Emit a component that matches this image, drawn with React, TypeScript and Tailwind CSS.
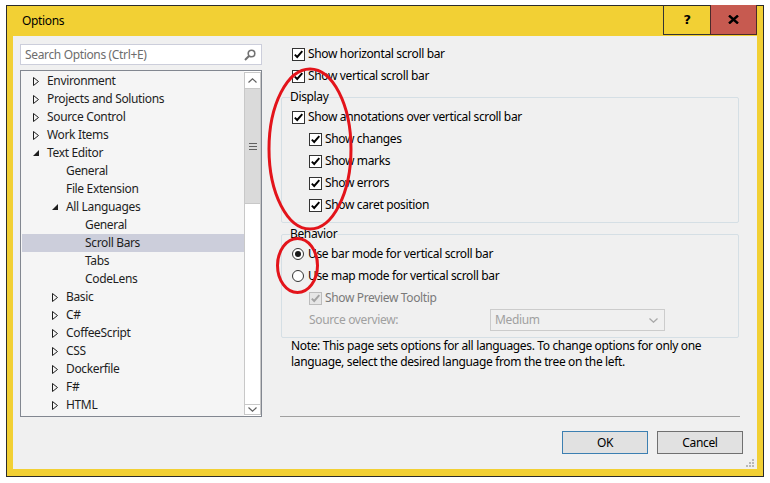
import React from "react";

type TreeNode = {
  label: string;
  level: 0 | 1 | 2;
  arrow?: "open" | "closed";
  selected?: boolean;
};

const tree: TreeNode[] = [
  { label: "Environment", level: 0, arrow: "closed" },
  { label: "Projects and Solutions", level: 0, arrow: "closed" },
  { label: "Source Control", level: 0, arrow: "closed" },
  { label: "Work Items", level: 0, arrow: "closed" },
  { label: "Text Editor", level: 0, arrow: "open" },
  { label: "General", level: 1 },
  { label: "File Extension", level: 1 },
  { label: "All Languages", level: 1, arrow: "open" },
  { label: "General", level: 2 },
  { label: "Scroll Bars", level: 2, selected: true },
  { label: "Tabs", level: 2 },
  { label: "CodeLens", level: 2 },
  { label: "Basic", level: 1, arrow: "closed" },
  { label: "C#", level: 1, arrow: "closed" },
  { label: "CoffeeScript", level: 1, arrow: "closed" },
  { label: "CSS", level: 1, arrow: "closed" },
  { label: "Dockerfile", level: 1, arrow: "closed" },
  { label: "F#", level: 1, arrow: "closed" },
  { label: "HTML", level: 1, arrow: "closed" },
];

const indent = ["pl-[11px]", "pl-[30px]", "pl-[49px]"];

function Arrow({ kind }: { kind?: "open" | "closed" }) {
  if (!kind) return null;
  if (kind === "closed")
    return (
      <svg width="6" height="9" viewBox="0 0 6 9">
        <path d="M0.5 0.5 L5.5 4.5 L0.5 8.5 Z" fill="none" stroke="#1e1e1e" strokeWidth="1" />
      </svg>
    );
  return (
    <svg width="6" height="6" viewBox="0 0 6 6">
      <path d="M6 0 L6 6 L0 6 Z" fill="#1e1e1e" />
    </svg>
  );
}

function Check({ disabled }: { disabled?: boolean }) {
  return (
    <span
      className={`flex h-[13px] w-[13px] shrink-0 items-center justify-center border ${
        disabled ? "border-[#bcbcbc] bg-[#e6e6e6]" : "border-[#333333] bg-white"
      }`}
    >
      <svg width="11" height="11" viewBox="0 0 11 11">
        <path
          d="M1.8 5.6 L4.2 8 L9.3 2.2"
          fill="none"
          stroke={disabled ? "#a3a3a3" : "#000000"}
          strokeWidth="1.9"
        />
      </svg>
    </span>
  );
}

function Radio({ on }: { on?: boolean }) {
  return (
    <span className="flex h-[12px] w-[12px] shrink-0 items-center justify-center rounded-full border border-[#333333] bg-white">
      {on && <span className="h-[6px] w-[6px] rounded-full bg-[#1a1a1a]" />}
    </span>
  );
}

export default function App() {
  return (
    <div className="relative h-[483px] w-[770px] overflow-hidden bg-white pl-[6px] pt-[5px] font-['Noto_Sans',sans-serif] text-[12px] tracking-[-0.35px] text-black">
      {/* Window */}
      <div className="flex h-[472px] w-[758px] flex-col border border-[#2b2b2b] bg-[#f2d034]">
        {/* Title bar */}
        <div className="flex h-[30px] shrink-0 items-start pr-[6px]">
          <div className="flex h-[29px] flex-1 items-center pl-[15px] leading-none">Options</div>
          <div className="-mt-px flex h-[30px] w-[47px] items-center justify-center border-b border-l border-[#333333] font-['DejaVu_Sans',sans-serif] text-[13px] font-bold">
            ?
          </div>
          <div className="-mt-px flex h-[30px] w-[47px] items-center justify-center border-x border-b border-[#4a2a2a] bg-[#c75a50]">
            <svg width="11" height="9" viewBox="0 0 11 9">
              <path d="M1 0.5 L10 8.5 M10 0.5 L1 8.5" stroke="#000" strokeWidth="2.4" />
            </svg>
          </div>
        </div>

        {/* Content */}
        <div className="relative mx-[6px] mb-[7px] flex flex-1 bg-[#f0f0f0] pl-[7px] pt-[8px]">
          {/* Left column */}
          <div className="flex w-[242px] flex-col">
            <div className="flex h-[21px] items-center border border-[#cccedb] bg-white pl-[4px] pr-[5px] text-[#6d6d6d]">
              <span className="flex-1 leading-none">Search Options (Ctrl+E)</span>
              <svg width="12" height="12" viewBox="0 0 12 12">
                <circle cx="7.5" cy="4.5" r="3.3" fill="none" stroke="#717171" strokeWidth="1.6" />
                <path d="M5.2 6.8 L1 11" stroke="#717171" strokeWidth="2" />
              </svg>
            </div>
            <div className="mt-[5px] flex h-[347px] border border-[#828790] bg-[#f5f5f5]">
              <div className="flex-1 pl-px pt-px">
                {tree.map((n, i) => (
                  <div
                    key={i}
                    className={`flex h-[18px] items-center ${indent[n.level]} ${
                      n.selected ? "bg-[#cccedb]" : ""
                    } text-[#1e1e1e]`}
                  >
                    <span className="flex w-[14px] items-center">
                      <Arrow kind={n.arrow} />
                    </span>
                    <span className="leading-none">{n.label}</span>
                  </div>
                ))}
              </div>
              {/* Scrollbar */}
              <div className="flex w-[17px] flex-col bg-white py-px">
                <div className="flex h-[17px] items-center justify-center border border-[#c8c8c8] bg-white">
                  <svg width="9" height="5" viewBox="0 0 9 5">
                    <path d="M0.5 4.5 L4.5 0.8 L8.5 4.5" fill="none" stroke="#606060" strokeWidth="1.2" />
                  </svg>
                </div>
                <div className="flex h-[115px] items-center justify-center border-x border-b border-[#c8c8c8] bg-[#dadada]">
                  <svg width="8" height="7" viewBox="0 0 8 7">
                    <path d="M0 0.5 H8 M0 3.5 H8 M0 6.5 H8" stroke="#606060" strokeWidth="1.2" />
                  </svg>
                </div>
                <div className="flex-1 border-x border-[#c8c8c8] bg-white" />
                <div className="flex h-[11px] items-center justify-center border border-[#c8c8c8] bg-white">
                  <svg width="9" height="5" viewBox="0 0 9 5">
                    <path d="M0.5 0.5 L4.5 4.2 L8.5 0.5" fill="none" stroke="#606060" strokeWidth="1.2" />
                  </svg>
                </div>
              </div>
            </div>
          </div>

          {/* Right column */}
          <div className="ml-[19px] flex w-[462px] flex-col">
            <div className="flex h-[20px] items-center gap-[3px] pl-[11px]">
              <Check />
              <span className="leading-none">Show horizontal scroll bar</span>
            </div>
            <div className="mt-[2px] flex h-[20px] items-center gap-[3px] pl-[11px]">
              <Check />
              <span className="leading-none">Show vertical scroll bar</span>
            </div>

            <fieldset className="mt-[3px] w-[458px] rounded-[2px] border border-[#d5dfe5] pb-[6px] pt-px">
              <legend className="ml-[8px] px-0 leading-[16px]">Display</legend>
              <div className="flex h-[22px] items-center gap-[3px] pl-[10px]">
                <Check />
                <span className="leading-none">Show annotations over vertical scroll bar</span>
              </div>
              {["Show changes", "Show marks", "Show errors", "Show caret position"].map((t) => (
                <div key={t} className="flex h-[22px] items-center gap-[3px] pl-[27px]">
                  <Check />
                  <span className="leading-none">{t}</span>
                </div>
              ))}
            </fieldset>

            <fieldset className="mt-[3px] w-[458px] rounded-[2px] border border-[#d5dfe5] pb-[6px] pt-px">
              <legend className="ml-[8px] px-0 leading-[16px]">Behavior</legend>
              <div className="flex h-[22px] items-center gap-[4px] pl-[10px]">
                <Radio on />
                <span className="leading-none">Use bar mode for vertical scroll bar</span>
              </div>
              <div className="flex h-[22px] items-center gap-[4px] pl-[10px]">
                <Radio />
                <span className="leading-none">Use map mode for vertical scroll bar</span>
              </div>
              <div className="flex h-[22px] items-center gap-[3px] pl-[27px]">
                <Check disabled />
                <span className="leading-none text-[#7a7a7a]">Show Preview Tooltip</span>
              </div>
              <div className="flex h-[22px] items-center pl-[27px]">
                <span className="w-[181px] leading-none text-[#a0a0a0]">Source overview:</span>
                <div className="flex h-[22px] w-[175px] items-center border border-[#cccccc] bg-[#f0f0f0] pl-[4px] pr-[6px] text-[#a0a0a0]">
                  <span className="flex-1 leading-none">Medium</span>
                  <svg width="9" height="5" viewBox="0 0 9 5">
                    <path d="M0.5 0.5 L4.5 4.2 L8.5 0.5" fill="none" stroke="#a8a8a8" strokeWidth="1.3" />
                  </svg>
                </div>
              </div>
            </fieldset>

            <p className="pl-[10px] leading-[16px]">
              Note: This page sets options for all languages. To change options for only one
              <br />
              language, select the desired language from the tree on the left.
            </p>

            <div className="-ml-px mt-[46px] h-px w-[460px] bg-[#a0a0a0]" />

            <div className="mt-[14px] flex justify-end gap-[9px]">
              <button className="h-[23px] w-[86px] border border-[#3c7fb1] bg-[#e1e1e1] leading-none">OK</button>
              <button className="h-[23px] w-[86px] border border-[#707070] bg-[#e1e1e1] leading-none">Cancel</button>
            </div>
          </div>

          {/* Resize grip */}
          <svg className="absolute bottom-[2px] right-[3px]" width="8" height="8" viewBox="0 0 8 8">
            {[
              [6, 0],
              [3, 3],
              [6, 3],
              [0, 6],
              [3, 6],
              [6, 6],
            ].map(([x, y]) => (
              <rect key={`${x}-${y}`} x={x} y={y} width="2" height="2" fill="#b8b8b8" />
            ))}
          </svg>
        </div>
      </div>

      {/* Red annotation marks */}
      <svg className="pointer-events-none absolute left-0 top-0" width="770" height="483" viewBox="0 0 770 483">
        <ellipse cx="310" cy="149" rx="41" ry="80" fill="none" stroke="#e3141b" strokeWidth="3" />
        <ellipse cx="297.5" cy="265.5" rx="20" ry="27" fill="none" stroke="#e3141b" strokeWidth="3" />
      </svg>
    </div>
  );
}
